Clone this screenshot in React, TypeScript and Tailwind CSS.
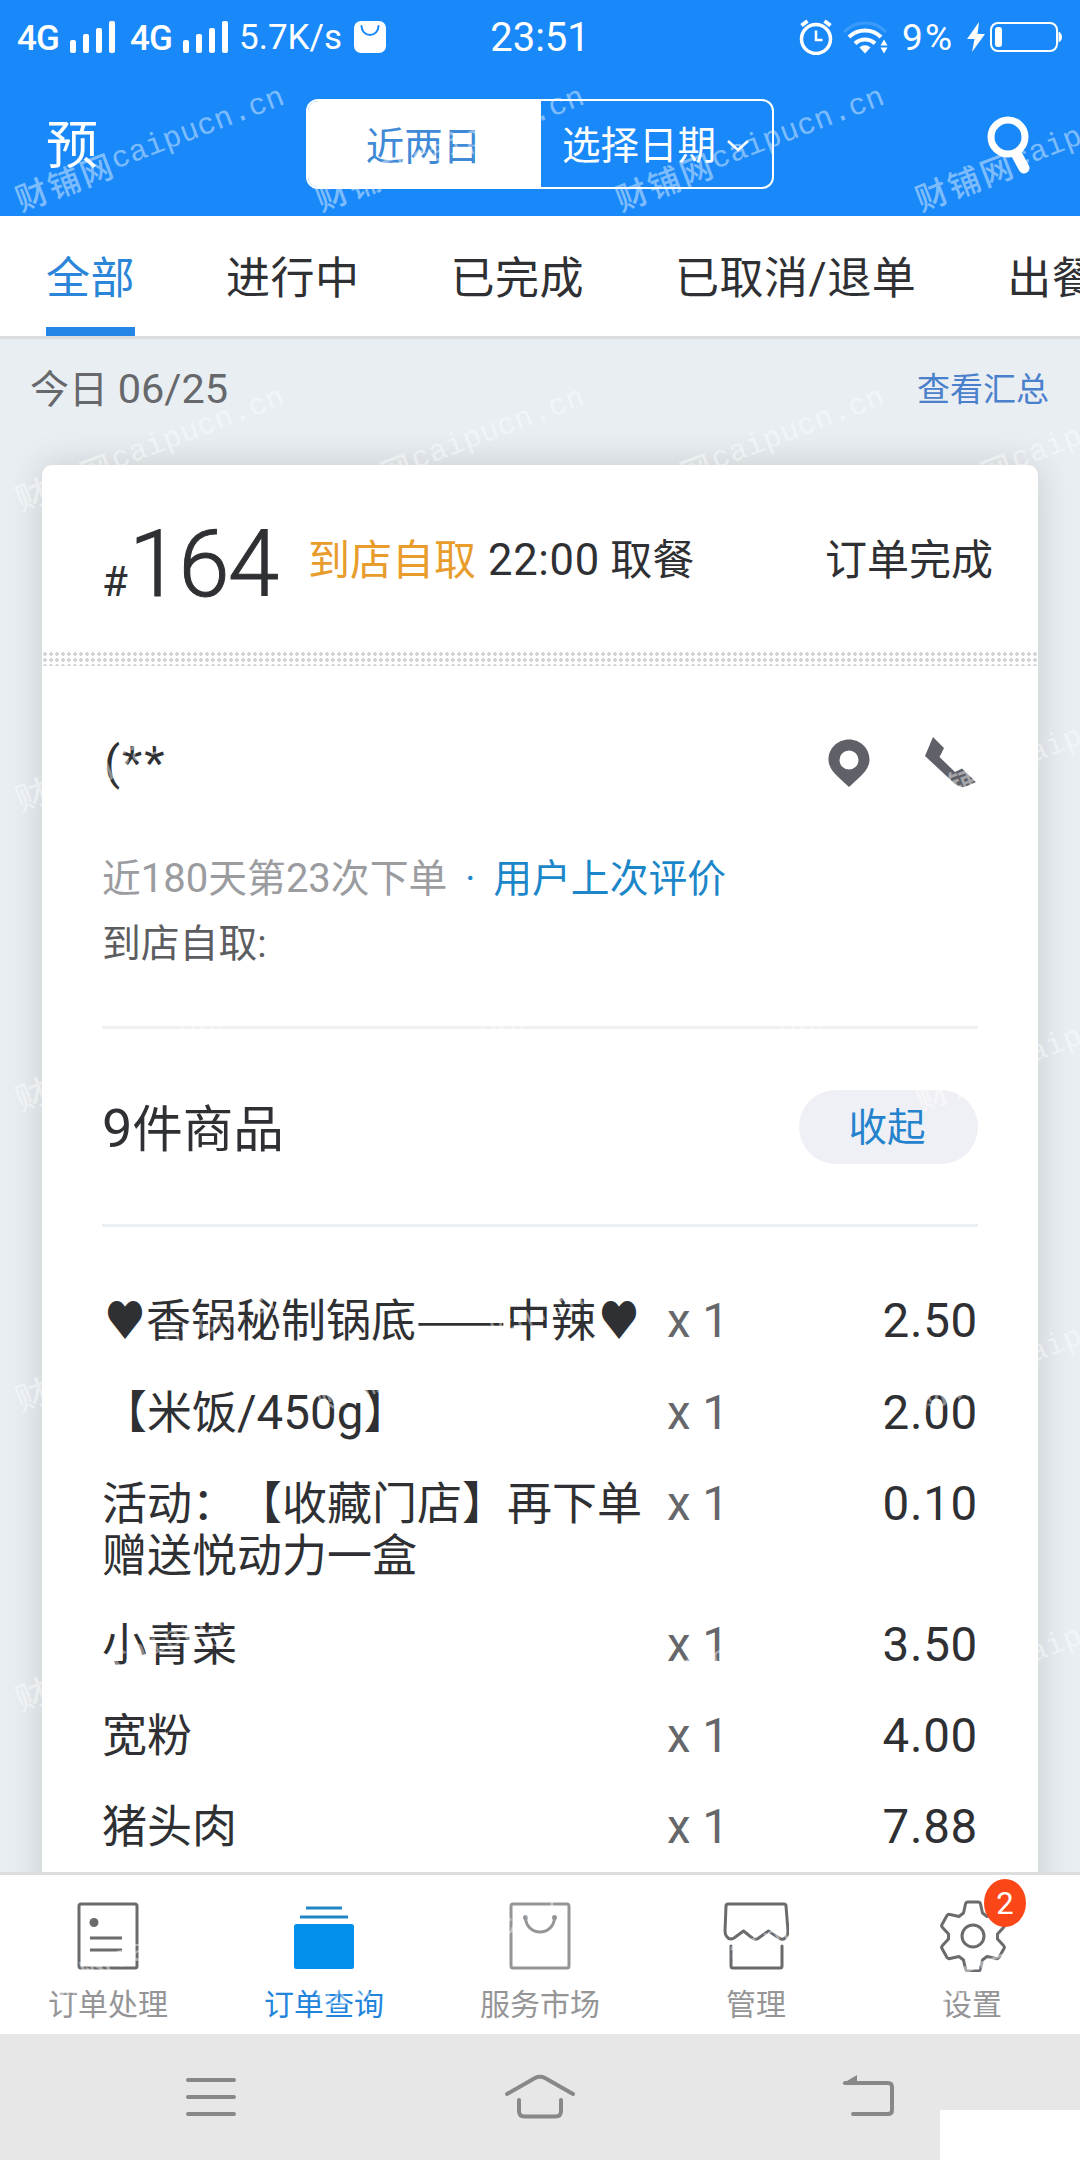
import React from 'react';

interface OrderItem {
  name: string;
  qty: number;
  price: string;
}

const items: OrderItem[] = [
  { name: '♥香锅秘制锅底——中辣♥', qty: 1, price: '2.50' },
  { name: '【米饭/450g】', qty: 1, price: '2.00' },
  { name: '活动：【收藏门店】再下单赠送悦动力一盒', qty: 1, price: '0.10' },
  { name: '小青菜', qty: 1, price: '3.50' },
  { name: '宽粉', qty: 1, price: '4.00' },
  { name: '猪头肉', qty: 1, price: '7.88' },
];

const tabs = ['全部', '进行中', '已完成', '已取消/退单', '出餐'];

const SignalBars: React.FC = () => (
  <svg width="46" height="32" viewBox="0 0 46 32" fill="#fff">
    <rect x="0" y="19" width="6" height="13" rx="2" />
    <rect x="13" y="13" width="6" height="19" rx="2" />
    <rect x="26" y="7" width="6" height="25" rx="2" />
    <rect x="39" y="0" width="6" height="32" rx="2" />
  </svg>
);

const StatusBar: React.FC = () => (
  <div className="grid h-[73px] grid-cols-[1fr_auto_1fr] items-center pl-[17px] pr-[17px] font-['Roboto'] text-[35px] leading-none text-white">
    <div className="flex items-center">
      <span className="w-[53px] pt-[3px] font-medium tracking-[-1px]">4G</span>
      <SignalBars />
      <span className="ml-[14px] w-[53px] pt-[3px] font-medium tracking-[-1px]">4G</span>
      <SignalBars />
      <span className="ml-[10px] w-[115px] pt-[2px]">5.7K/s</span>
      <svg width="32" height="32" viewBox="0 0 32 32">
        <rect width="32" height="32" rx="7" fill="#fff" />
        <path d="M7.500 5 a8.500 9 0 0 0 17 0" fill="none" stroke="#1989fa" strokeWidth="2" strokeLinecap="round" />
      </svg>
    </div>
    <span className="pt-[3px] text-[40px]">23:51</span>
    <div className="flex items-center justify-end">
      <svg width="34" height="36" viewBox="0 0 34 36" fill="none" stroke="#fff">
        <circle cx="17" cy="20" r="14.500" strokeWidth="3.500" />
        <path d="M17 11.500V21h6.500" strokeWidth="2.500" />
        <path d="M2.500 6.500L8.500 2M31.500 6.500L25.500 2" strokeWidth="4" />
      </svg>
      <svg className="ml-[10px]" width="46" height="34" viewBox="0 0 46 34" fill="none" stroke="#fff">
        <path d="M1 12a29 29 0 0 1 42 0" strokeWidth="3" opacity="0.150" />
        <path d="M6 17a23 23 0 0 1 32 0" strokeWidth="4" />
        <path d="M12 23.500a14.500 14.500 0 0 1 20 0" strokeWidth="4" />
        <path d="M16.500 27.500a8 8 0 0 1 11 0L22 33.500z" fill="#fff" stroke="none" />
        <path d="M37.500 25.500h7L41 19.500zM37.500 27.500h7L41 33.500z" fill="#fff" stroke="none" />
      </svg>
      <span className="ml-[13px] pt-[2px] text-[37px] tracking-[2px]">9%</span>
      <svg className="ml-[13px]" width="18" height="30" viewBox="0 0 18 30" fill="#fff">
        <path d="M12 0L0 17h7.500L5 30L18 12h-7.500z" />
      </svg>
      <svg className="ml-[5px]" width="73" height="32" viewBox="0 0 73 32" fill="none">
        <rect x="1" y="2" width="66" height="28" rx="7" stroke="#fff" strokeWidth="2" />
        <rect x="5" y="6" width="7" height="20" rx="3" fill="#fff" />
        <path d="M68.500 10.500q3.500 2 3.500 5.500t-3.500 5.500z" fill="#fff" />
      </svg>
    </div>
  </div>
);

const Header: React.FC = () => (
  <div className="h-[216px] shrink-0 bg-[#1989fa]">
    <StatusBar />
    <div className="flex h-[143px] items-start pl-[46px] pr-[50px] pt-[26px] text-white">
      <span className="w-[260px] text-[52px] leading-[96px]">预</span>
      <div className="flex h-[90px] w-[468px] overflow-hidden rounded-[12px] border-2 border-white text-[38.500px] leading-[88px]">
        <div className="w-[233px] bg-white pr-[2px] pt-[2px] text-center text-[#3f8ad6]">近两日</div>
        <div className="flex flex-1 items-center pl-[21px] pt-[3px]">
          <span>选择日期</span>
          <svg className="ml-[10px]" width="24" height="16" viewBox="0 0 24 16" fill="none" stroke="#fff" strokeWidth="2.500">
            <path d="M2 3l10 9L22 3" />
          </svg>
        </div>
      </div>
      <svg className="ml-auto mt-[17px]" width="46" height="60" viewBox="0 0 46 60" fill="none" stroke="#fff">
        <circle cx="24" cy="21" r="17" strokeWidth="7" />
        <path d="M33 39l7 13" strokeWidth="11" strokeLinecap="round" />
      </svg>
    </div>
  </div>
);

const TabBar: React.FC = () => (
  <div className="flex h-[123px] shrink-0 gap-[91px] overflow-hidden whitespace-nowrap border-b-[3px] border-[#dcdddf] bg-white pl-[46px] text-[44px] leading-[120px] tracking-[0.500px] text-[#2f3033]">
    {tabs.map((tab, i) => (
      <div
        key={tab}
        className={
          i === 0
            ? 'h-[120px] shrink-0 border-b-[9px] border-[#2586e8] pt-[3px] text-[#2b86d9]'
            : 'h-[120px] shrink-0 pt-[3px]'
        }
      >
        {tab}
      </div>
    ))}
  </div>
);

// Hearts are taller and narrower than the surrounding text, latin runs slightly larger,
// and the double dash has to fill two full character cells
const ItemName: React.FC<{ name: string }> = ({ name }) => (
  <>
    {name.split(/(♥|——|[\w/]+)/).map((part, i) => {
      if (part === '♥') {
        return (
          <span key={i} className="inline-block w-[44px] origin-center scale-x-[0.880] scale-y-[1.150] text-center font-['Inter']">
            {part}
          </span>
        );
      }
      if (part === '——') {
        return (
          <span key={i} className="inline-block w-[90px] origin-left scale-x-[1.190] whitespace-nowrap">
            {part}
          </span>
        );
      }
      if (/^[\w/]+$/.test(part)) {
        return (
          <span key={i} className="font-['Roboto'] text-[47.500px] leading-none">
            {part}
          </span>
        );
      }
      return part;
    })}
  </>
);

const OrderCard: React.FC = () => (
  <div className="mx-[42px] h-[1500px] rounded-t-[10px] bg-white text-[#2f3033] shadow-[0_0_36px_rgba(0,0,0,0.150)]">
    {/* Pickup number and status */}
    <div className="flex h-[186px] items-center pl-[60px] pr-[45px] text-[42px]">
      <div className="flex w-[206px] items-baseline pt-[13px] leading-none">
        <span className="w-[27px] text-[42px]">#</span>
        <span className="text-[92px] font-light tracking-[-1.500px] [-webkit-text-stroke:1px_#2f3033]">164</span>
      </div>
      <span className="pt-[4px] text-[#e89c2c]">到店自取</span>
      <span className="ml-[12px] pt-[4px]">
        <span className="text-[43.500px] leading-none tracking-[0.700px]">22:00</span> 取餐
      </span>
      <span className="ml-auto pt-[4px]">订单完成</span>
    </div>
    <div className="h-[15px] bg-[radial-gradient(circle,#d3d5d8_1.600px,transparent_2px)] bg-[length:6px_6px]" />

    {/* Customer */}
    <div className="px-[60px]">
      <div className="flex h-[179px] items-center pt-[15px]">
        <span className="pb-[2px] pl-[2px] text-[47px] leading-none tracking-[2px]">(**</span>
        <svg className="ml-auto" width="42" height="48" viewBox="0 0 42 48">
          <path fillRule="evenodd" fill="#606168" d="M21 0.500C9.500 0.500 0.500 9.500 0.500 20.500c0 10 8 16 20.500 27.500c12.500-11.500 20.500-17.500 20.500-27.500C41.500 9.500 32.500 0.500 21 0.500zM21 11.500a9.500 9.500 0 1 1 0 19a9.500 9.500 0 1 1 0-19z" />
        </svg>
        <svg className="ml-[54px]" width="54" height="54" viewBox="0 0 54 54" fill="#606168">
          <path d="M9 1L20 12L15.500 21L31 36L38 32.500L52 46L43 50Q37 53 31 48L1 20z" />
        </svg>
      </div>
      <div className="text-[38.800px] leading-[65px]">
        <div className="flex pt-[1px]">
          <span className="text-[#9b9c9f]">
            近<span className="text-[40px] leading-none">180</span>天第
            <span className="text-[40px] leading-none">23</span>次下单
          </span>
          <span className="w-[46px] text-center text-[#1b86c8]">·</span>
          <span className="text-[#1b86c8]">用户上次评价</span>
        </div>
        <div className="text-[#5c5d61]">到店自取:</div>
      </div>

      <div className="mt-[50px] flex h-[201px] items-center border-b-[3px] border-t-[3px] border-b-[#e9eff4] border-t-[#eff0f2]">
        <span className="pt-[7px] text-[50.500px]">
          <span className="text-[54px] leading-none">9</span>件商品
        </span>
        <button className="ml-auto h-[74px] w-[179px] rounded-full bg-[#eff0f5] pr-[3px] pt-[2px] text-[38.500px] text-[#2483cc]">收起</button>
      </div>

      {/* Goods */}
      <div className="flex flex-col gap-[37px] pt-[67px]">
        {items.map((item) => (
          <div key={item.name} className="flex items-start text-[47.500px] leading-[54px]">
            <span className="-mt-[2px] mb-[2px] w-[548px] shrink-0 font-['Noto_Sans_CJK_SC'] text-[45px] leading-[52px] [text-spacing-trim:space-all]">
              <ItemName name={item.name} />
            </span>
            <span className="ml-[17px] text-[#66676b]">x {item.qty}</span>
            <span className="ml-auto tracking-[0.700px]">{item.price}</span>
          </div>
        ))}
      </div>
    </div>
  </div>
);

const OrderIcon: React.FC = () => (
  <svg width="62" height="68" viewBox="0 0 62 68" fill="none" stroke="#6b6b6d" strokeWidth="3">
    <rect x="2" y="2" width="58" height="64" rx="2" />
    <circle cx="17" cy="20.500" r="4.500" fill="#6b6b6d" stroke="none" />
    <path d="M13 36h32M13 48h32" />
  </svg>
);

const QueryIcon: React.FC = () => (
  <svg width="62" height="68" viewBox="0 0 62 68" fill="#0290ec">
    <path d="M13 6h36M7 15h48" stroke="#2286c4" strokeWidth="3" />
    <rect x="1" y="22" width="60" height="45" rx="2.500" />
  </svg>
);

const MarketIcon: React.FC = () => (
  <svg width="62" height="68" viewBox="0 0 62 68" fill="none" stroke="#959597" strokeWidth="3">
    <rect x="2" y="2" width="58" height="64" rx="2" />
    <path d="M16.500 16C17 25 24 30 31 30s14-5 14.500-14" />
    <circle cx="16.500" cy="15.500" r="2.500" fill="#959597" stroke="none" />
    <circle cx="45.500" cy="15.500" r="2.500" fill="#959597" stroke="none" />
  </svg>
);

const ShopIcon: React.FC = () => (
  <svg width="66" height="68" viewBox="0 0 66 68" fill="none" stroke="#6b6b6d" strokeWidth="3" strokeLinejoin="round" strokeLinecap="round">
    <path d="M5 2h56q2 0 2 2l2 25q0 4-2 6q-3 4-7 1l-10.500-7L35 36.500q-2.500 1.500-5 0L20.500 29L11 36q-4 2.500-7-1q-2-2-2-6L3 4q0-2 2-2z" />
    <path d="M8 44v20q0 2 2 2h47q2 0 2-2V44" />
  </svg>
);

const GearIcon: React.FC = () => (
  <svg className="ml-[2px]" width="68" height="72" viewBox="0 0 68 72" fill="none" stroke="#6b6b6d" strokeWidth="3" strokeLinejoin="round">
    <path d="M29 2h10q2 0 2.500 2l2 9l4.500 3.500l9-2q2-.5 3 1l5 9q1 1.500-.5 3l-6 6.500v5l6 6.500q1.500 1.500.5 3l-5 9q-1 1.500-3 1l-9-2l-4.500 3.500l-2 9q-.5 2-2.500 2H29q-2 0-2.500-2l-2-9l-4.500-3.500l-9 2q-2 .5-3-1l-5-9q-1-1.500.5-3L9.500 39v-5l-6-6.500q-1.500-1.500-.5-3l5-9q1-1.500 3-1l9 2l4.500-3.500l2-9Q27 2 29 2z" />
    <circle cx="34" cy="36" r="11" />
  </svg>
);

const navItems = [
  { label: '订单处理', icon: <OrderIcon /> },
  { label: '订单查询', icon: <QueryIcon />, active: true },
  { label: '服务市场', icon: <MarketIcon /> },
  { label: '管理', icon: <ShopIcon /> },
  { label: '设置', icon: <GearIcon />, badge: 2 },
];

const BottomNav: React.FC = () => (
  <div className="grid h-[162px] shrink-0 grid-cols-5 border-t-[3px] border-[#dcdddf] bg-white">
    {navItems.map((item) => (
      <div key={item.label} className="flex flex-col items-center pt-[25px]">
        <div className="relative flex h-[72px] items-center">
          {item.icon}
          {item.badge && (
            <span className="absolute -right-[19px] -top-[21px] flex h-[48px] w-[42px] items-center justify-center rounded-[50%] bg-[#fb4718] pt-[2px] text-[31px] text-white">
              {item.badge}
            </span>
          )}
        </div>
        <span className={`mt-[14px] text-[30px] leading-[38px] ${item.active ? 'text-[#2384dc]' : 'text-[#959597]'}`}>
          {item.label}
        </span>
      </div>
    ))}
  </div>
);

const SystemBar: React.FC = () => (
  <div className="relative flex h-[126px] shrink-0 items-center justify-between bg-[#e7e7e7] pl-[184px] pr-[185px]">
    <svg width="54" height="44" viewBox="0 0 54 44" stroke="#888" strokeWidth="4" strokeLinecap="round">
      <path d="M4 5h46M4 22h46M4 39h46" />
    </svg>
    <svg width="72" height="48" viewBox="0 0 72 48" fill="none" stroke="#888" strokeWidth="4" strokeLinecap="round" strokeLinejoin="round">
      <path d="M3 21L31 5q5-2.500 10 0L69 21" />
      <path d="M15 27v11q0 5.500 5.500 5.500h31q5.500 0 5.500-5.500V27" />
    </svg>
    <svg width="54" height="44" viewBox="0 0 54 44" fill="none" stroke="#888" strokeWidth="4" strokeLinecap="round">
      <path d="M4 8h43q4 0 4 4v23q0 4-4 4H12" />
      <path d="M1 9L16 0v9z" fill="#888" stroke="none" />
    </svg>
    <div className="absolute bottom-0 right-0 h-[50px] w-[140px] bg-white" />
  </div>
);

const Watermarks: React.FC = () => (
  <div className="pointer-events-none absolute inset-0 grid auto-rows-[300px] grid-cols-[repeat(4,300px)] overflow-hidden">
    {Array.from({ length: 28 }, (_, i) => (
      <div key={i} className="pl-[15px] pt-[173px]">
        <div className="flex w-[300px] origin-[16px_50%] -rotate-[21deg] items-center whitespace-nowrap leading-[40px] text-white/45">
          <span className="font-['Noto_Sans_CJK_SC'] text-[32px] font-medium tracking-[2.500px]">财铺网</span>
          <span className="font-['Liberation_Mono'] text-[30px] tracking-[0.300px]">caipucn.cn</span>
        </div>
      </div>
    ))}
  </div>
);

export default function App() {
  return (
    <div className="relative flex h-[2160px] w-[1080px] flex-col overflow-hidden bg-[#e9eef2] font-['Roboto','Noto_Sans_CJK_SC',sans-serif]">
      <Header />
      <TabBar />
      <div className="min-h-0 flex-1 overflow-hidden">
        <div className="flex h-[126px] items-center justify-between pb-[24px] pl-[30px] pr-[31px]">
          <span className="text-[39px] text-[#67686b]">
            今日 <span className="text-[41.500px] leading-none">06/25</span>
          </span>
          <span className="pb-[1px] text-[33px] text-[#4a80cc]">查看汇总</span>
        </div>
        <OrderCard />
      </div>
      <BottomNav />
      <SystemBar />
      <Watermarks />
    </div>
  );
}
